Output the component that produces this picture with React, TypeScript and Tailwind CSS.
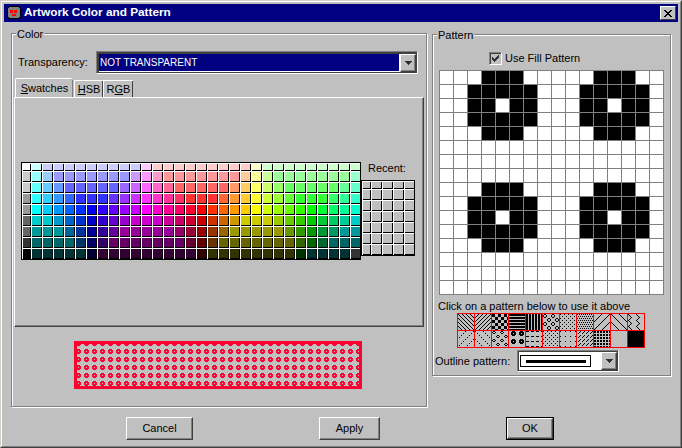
import type { ReactNode } from 'react';

const BLOB = ['00011100', '00111110', '00110110', '00111110', '00011100', '00000000', '00000000', '00000000'];

// swatch rows as [colour, repeat], same order as the java colour chooser
const expand = (row: string) =>
  row.split(' ').flatMap((item) => {
    const [hex, count] = item.split('x');
    return Array<string>(Number(count || 1)).fill(hex);
  });

const SWATCHES = [
  'fff cff ccfx9 fcf fccx9 ffc cfcx9',
  'ccc 9ff 9cf 99fx7 c9f f9f f9c f99x7 fc9 ff9 cf9 9f9x7 9fc',
  'ccc 6ff 6cf 69f 66fx5 96f c6f f6f f6c f69 f66x5 f96 fc6 ff6 cf6 9f6 6f6x5 6f9 6fc',
  '999 3ff 3cf 39f 36f 33fx3 63f 93f c3f f3f f3c f39 f36 f33x3 f63 f93 fc3 ff3 cf3 9f3 6f3 3f3x3 3f6 3f9 3fc',
  '999 0ff 0cf 09f 06f 03f 00f 30f 60f 90f c0f f0f f0c f09 f06 f03 f00 f30 f60 f90 fc0 ff0 cf0 9f0 6f0 3f0 0f0 0f3 0f6 0f9 0fc',
  '666 0ccx2 09c 06c 03c 00c 30c 60c 90c c0cx3 c09 c06 c03 c00 c30 c60 c90 cc0x3 9c0 6c0 3c0 0c0 0c3 0c6 0c9 0cc',
  '666 099x3 069 039 009 309 609 909x5 906 903 900 930 960 990x5 690 390 090 093 096 099x2',
  '333 066x4 036 006 306 606x7 603 600 630 660x7 360 060 063 066x3',
  '000 033x5 003 303x9 300 330x8 030 033x4 333',
].flatMap(expand);

const RECENT = Array<string>(35).fill('c0c0c0');

const TILES: string[][] = [
  ['1000', '0100', '0010', '0001'],
  ['0001', '0010', '0100', '1000'],
  ['111000', '111000', '111000', '000111', '000111', '000111'],
  ['1', '1', '0'],
  ['110'],
  ['01100000', '10010000', '10010000', '01100000', '00000110', '00001001', '00001001', '00000110'],
  ['1000', '0000', '0010', '0000'],
  ['1010', '0000', '0101', '0000'],
  ['00000001', '00000010', '00000100', '00001000', '00010000', '00100000', '01000000', '10000000'],
  ['10000000', '01000000', '00100000', '00010000', '00001000', '00000100', '00000010', '00000001'],
  ['10000000', '01000000', '00100000', '00010000', '00100000', '01000000'],
  ['00000001', '00000000', '00000100', '00000000', '00010000', '00000000', '01000000', '00000000'],
  ['10000000', '00000000', '00100000', '00000000', '00001000', '00000000', '00000010', '00000000'],
  ['01100000', '10010000', '01100000', '00000000', '00000110', '00001001', '00000110', '00000000'],
  BLOB,
  ['11100', '00000', '00000', '00000', '00000'],
  ['1000', '0000', '0010', '0000'],
  ['10000', '00000', '00000', '00000', '00000'],
  ['0001', '0010', '0100', '0000'],
  ['110', '110', '000'],
  ['0'],
  ['1'],
];

function GroupBox({ title, className, children }: { title: string; className: string; children: ReactNode }) {
  return (
    <div className={`relative border border-[#808080] shadow-[inset_1px_1px_0_#fff,1px_1px_0_#fff] ${className}`}>
      <span className="absolute -top-[7px] left-[4px] bg-[#c0c0c0] px-px leading-[14px]">{title}</span>
      {children}
    </div>
  );
}

function SwatchGrid({ colors, className, gridClassName }: { colors: string[]; className: string; gridClassName: string }) {
  return (
    <div className={`relative shrink-0 overflow-hidden bg-white ${className}`}>
      <div className={`grid -mt-px ${gridClassName}`}>
        {colors.map((color, i) => (
          <div key={i} className="h-[11px] pr-px pb-px">
            <div className="h-full border-r border-b border-black" style={{ backgroundColor: `#${color}` }} />
          </div>
        ))}
      </div>
      <div className="absolute inset-0 border border-black shadow-[inset_1px_1px_0_#fff]" />
    </div>
  );
}

function ArrowButton() {
  return (
    <div className="flex w-[16px] items-center justify-center self-stretch border border-t-white border-l-white border-r-[#404040] border-b-[#404040] bg-[#c0c0c0] shadow-[inset_-1px_-1px_0_#808080]">
      <svg width="7" height="4" viewBox="0 0 7 4" shapeRendering="crispEdges">
        <path d="M0 0h7v1H0zM1 1h5v1H1zM2 2h3v1H2zM3 3h1v1H3z" fill="#303030" />
      </svg>
    </div>
  );
}

function Tile({ bits }: { bits: string[] }) {
  const cells: ReactNode[] = [];
  for (let y = 0; y < 16; y++) {
    const row = bits[y % bits.length];
    for (let x = 0; x < 16; x++) {
      if (row[x % row.length] === '1') cells.push(<rect key={`${x}-${y}`} x={x} y={y} width="1" height="1" />);
    }
  }
  return (
    <svg width="16" height="16" viewBox="0 0 16 16" shapeRendering="crispEdges" className="block bg-[#c0c0c0]">
      {cells}
    </svg>
  );
}

function PreviewFill() {
  return (
    <svg width="288" height="48" viewBox="0 0 288 48" shapeRendering="crispEdges" className="block">
      <defs>
        <pattern id="blob" width="8" height="8" patternUnits="userSpaceOnUse">
          <path d="M3 0h3v1H3zM2 1h5v1H2zM2 2h2v1H2zM5 2h2v1H5zM2 3h5v1H2zM3 4h3v1H3z" fill="#ff0033" />
        </pattern>
      </defs>
      <rect width="288" height="48" fill="url(#blob)" />
      <rect x="1.5" y="1.5" width="285" height="45" fill="none" stroke="#ff0033" strokeWidth="3" />
    </svg>
  );
}

function DialogButton({ label, className }: { label: string; className: string }) {
  return (
    <button className={`flex h-[23px] items-center justify-center border border-t-white border-l-white border-r-[#404040] border-b-[#404040] shadow-[inset_-1px_-1px_0_#808080] ${className}`}>
      {label}
    </button>
  );
}

export default function App() {
  return (
    <div className="h-[448px] w-[682px] overflow-hidden border border-t-[#d4d0c8] border-l-[#d4d0c8] border-r-[#404040] border-b-[#404040] bg-[#c0c0c0] font-['Liberation_Sans',sans-serif] text-[11px] text-black">
      <div className="h-full border border-t-white border-l-white border-r-[#808080] border-b-[#808080] p-[2px]">
        {/* title bar */}
        <div className="flex h-[18px] items-center bg-[#000080] pr-[2px] pl-[2px]">
          <svg width="16" height="14" viewBox="0 0 16 14" shapeRendering="crispEdges" className="shrink-0">
            <rect x="1.5" y="0.5" width="13" height="12" rx="3" fill="#808080" stroke="#000" />
            <path d="M4 4h3v3H4zM8 4h3v3H8zM6 8h4v2H6z" fill="#ff0000" />
          </svg>
          <span className="ml-[2px] text-[11.8px] font-bold whitespace-nowrap text-white">Artwork Color and Pattern</span>
          <div className="ml-auto flex h-[14px] w-[16px] items-center justify-center border border-t-white border-l-white border-r-[#404040] border-b-[#404040] bg-[#c0c0c0]">
            <svg width="8" height="7" viewBox="0 0 8 7" shapeRendering="crispEdges">
              <path d="M0 0h2v1h1v1h2V1h1V0h2v1H7v1H6v1H5v1h1v1h1v1h1v1H6V6H5V5H3v1H2v1H0V6h1V5h1V4h1V3H2V2H1V1H0z" fill="#000" />
            </svg>
          </div>
        </div>

        <div className="flex items-start gap-[5px] pl-[7px]">
          {/* colour side */}
          <GroupBox title="Color" className="mt-[11px] h-[374px] w-[416px]">
            <div className="mt-[17px] flex h-[23px] items-center pl-[6px]">
              <span className="w-[78px]">Transparency:</span>
              <div className="flex h-[23px] w-[322px] border border-t-[#808080] border-l-[#808080] border-r-white border-b-white">
                <div className="flex flex-1 gap-px border border-t-2 border-l-2 border-[#404040] bg-white">
                  <div className="flex flex-1 items-center border-b border-white bg-[#000080] pl-[1px] text-[10px] text-white">NOT TRANSPARENT</div>
                  <ArrowButton />
                </div>
              </div>
            </div>

            <div className="mt-[4px] ml-[3px] flex h-[19px] items-end">
              <div className="flex h-[19px] w-[58px] items-center justify-center rounded-t-[2px] border-t border-l border-t-white border-l-white shadow-[inset_-1px_0_0_#808080]">
                <span><span className="underline">S</span>watches</span>
              </div>
              <div className="ml-px flex h-[17px] w-[29px] items-center justify-center border-t border-l border-t-white border-l-white shadow-[inset_-1px_0_0_#404040]">
                <span><span className="underline">H</span>SB</span>
              </div>
              <div className="flex h-[17px] w-[30px] items-center justify-center border-t border-l border-t-white border-l-white shadow-[inset_-1px_0_0_#404040]">
                <span>R<span className="underline">G</span>B</span>
              </div>
            </div>
            <div className="ml-[2px] flex h-[230px] w-[410px] items-center justify-center border border-t-white border-l-white border-r-[#404040] border-b-[#404040] pr-[2px] pb-[2px] shadow-[inset_-1px_-1px_0_#808080]">
              <SwatchGrid colors={SWATCHES} className="h-[98px] w-[340px]" gridClassName="grid-cols-[repeat(31,11px)]" />
              <div className="flex h-[98px] flex-col justify-between pb-[4px]">
                <span className="h-[18px] pl-[7px] leading-[13px]">Recent:</span>
                <SwatchGrid colors={RECENT} className="h-[76px] w-[54px]" gridClassName="grid-cols-[repeat(5,11px)]" />
              </div>
            </div>

            <div className="mt-[14px] ml-[62px] w-[288px]">
              <PreviewFill />
            </div>
          </GroupBox>

          {/* pattern side */}
          <GroupBox title="Pattern" className="mt-[12px] h-[342px] w-[239px]">
            <div className="mt-[17px] flex h-[13px] items-center pl-[56px]">
              <div className="flex h-[13px] w-[13px] items-center justify-center border border-t-[#808080] border-l-[#808080] border-r-white border-b-white shadow-[inset_1px_1px_0_#404040]">
                <svg width="9" height="9" viewBox="0 0 9 9" shapeRendering="crispEdges">
                  <path d="M7 1h1v3H7zM6 2h1v3H6zM5 3h1v3H5zM4 4h1v3H4zM3 5h1v3H3zM2 4h1v3H2zM1 3h1v3H1z" fill="#303030" />
                </svg>
              </div>
              <span className="ml-[3px]">Use Fill Pattern</span>
            </div>

            <div className="mt-[5px] ml-[6px] grid w-[225px] grid-cols-[repeat(16,13px)] gap-px bg-[#808080] p-px">
              {Array.from({ length: 256 }, (_, i) => (
                <div key={i} className={BLOB[Math.floor(i / 16) % 8][i % 8] === '1' ? 'h-[13px] bg-black' : 'h-[13px] bg-white'} />
              ))}
            </div>

            <div className="mt-[4px] h-[14px] pl-[5px] leading-[14px]">Click on a pattern below to use it above</div>
            <div className="ml-[24px] grid w-[188px] grid-cols-[repeat(11,16px)] gap-px bg-[#ff0000] p-px">
              {TILES.map((bits, i) => (
                <Tile key={i} bits={bits} />
              ))}
            </div>

            <div className="mt-[2px] flex h-[22px] items-center pl-[2px]">
              <span className="w-[82px]">Outline pattern:</span>
              <div className="flex h-[22px] w-[102px] border border-t-[#808080] border-l-[#808080] border-r-white border-b-white">
                <div className="flex flex-1 items-stretch border border-[#404040] bg-white">
                  <div className="flex flex-1 items-center pl-[1px]">
                    <div className="flex h-[12px] w-[71px] items-center justify-center border border-black">
                      <div className="h-[3px] w-[60px] bg-black" />
                    </div>
                  </div>
                  <ArrowButton />
                </div>
              </div>
            </div>
          </GroupBox>
        </div>

        <div className="mt-[10px] flex pl-[122px]">
          <DialogButton label="Cancel" className="w-[67px]" />
          <DialogButton label="Apply" className="ml-[126px] w-[61px]" />
          <div className="ml-[126px] flex h-[23px] w-[48px] border border-black">
            <DialogButton label="OK" className="!h-[21px] w-full" />
          </div>
        </div>
      </div>
    </div>
  );
}
